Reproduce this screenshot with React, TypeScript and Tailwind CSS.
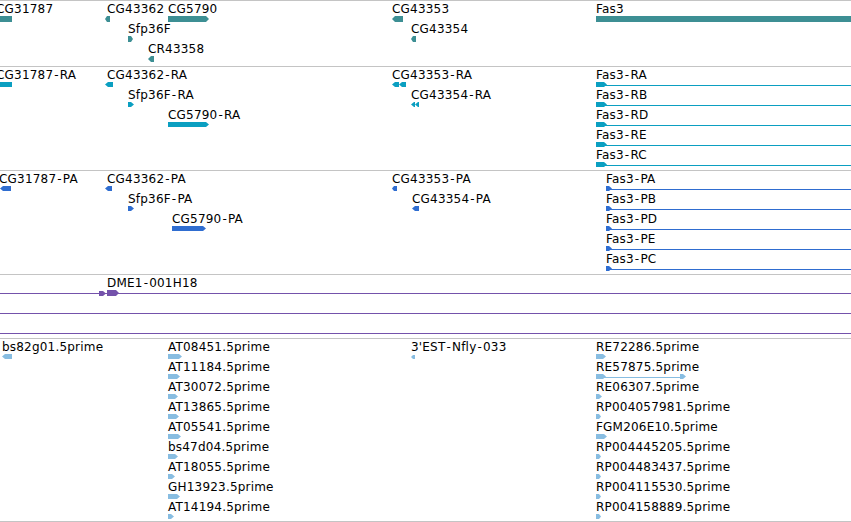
import React from "react";

type Dir = "r" | "l" | "ll" | "bar";
type Feat = {
  label?: string;
  lx?: number;
  row: number;
  g?: { x: number; w: number; dir: Dir; h?: number; top?: number };
  g2?: { x: number; w: number; dir: Dir; h?: number; top?: number };
  line?: { x: number; end?: number };
};

function pts(dir: Dir, w: number, h: number): string[] {
  const t = Math.min(3, Math.max(2, Math.floor(w / 2)));
  if (dir === "bar") return [`0,0 ${w},0 ${w},${h} 0,${h}`];
  if (dir === "r") return [`0,0 ${w - t},0 ${w},${h / 2} ${w - t},${h} 0,${h}`];
  if (dir === "l") return [`${w},0 ${t},0 0,${h / 2} ${t},${h} ${w},${h}`];
  const hw = w / 2;
  return [
    `${hw},0 3,0 0,${h / 2} 3,${h} ${hw},${h}`,
    `${w},0 ${hw + 3},0 ${hw},${h / 2} ${hw + 3},${h} ${w},${h}`,
  ];
}

function Glyph({
  g,
  row,
  color,
  h,
}: {
  g: NonNullable<Feat["g"]>;
  row: number;
  color: string;
  h: number;
}) {
  const hh = g.h ?? h;
  const top = row * 20 + (g.top ?? 15);
  return (
    <svg
      className="absolute"
      style={{ left: g.x, top }}
      width={g.w}
      height={hh}
      viewBox={`0 0 ${g.w} ${hh}`}
    >
      {pts(g.dir, g.w, hh).map((p, i) => (
        <polygon key={i} points={p} fill={color} />
      ))}
    </svg>
  );
}

function Label({ text }: { text: string }) {
  const parts = text.split("-");
  return (
    <>
      {parts.map((p, i) => (
        <React.Fragment key={i}>
          {i > 0 && <span className="mx-px">-</span>}
          {p}
        </React.Fragment>
      ))}
    </>
  );
}

function Track({
  feats,
  color,
  h,
  heightClass,
  bottom,
}: {
  feats: Feat[];
  color: string;
  h: number;
  heightClass: string;
  bottom?: boolean;
}) {
  return (
    <div
      className={`relative w-full overflow-hidden border-t border-[#c4c4c4] ${heightClass} ${
        bottom ? "border-b" : ""
      }`}
    >
      {feats.map((f, i) => (
        <React.Fragment key={i}>
          {f.line && (
            <div
              className="absolute h-px"
              style={{
                left: f.line.x,
                top: f.row * 20 + 18,
                width: f.line.end ? f.line.end - f.line.x : 900,
                backgroundColor: color,
              }}
            />
          )}
          {f.g && <Glyph g={f.g} row={f.row} color={color} h={h} />}
          {f.g2 && <Glyph g={f.g2} row={f.row} color={color} h={h} />}
          {f.label && (
            <div
              className="absolute whitespace-nowrap text-[12px] leading-[14px] tracking-[0.2px] text-black"
              style={{ left: f.lx, top: f.row * 20 + 1 }}
            >
              <Label text={f.label} />
            </div>
          )}
        </React.Fragment>
      ))}
    </div>
  );
}

const gene: Feat[] = [
  { label: "CG31787", lx: -4, row: 0, g: { x: 0, w: 12, dir: "bar" } },
  { label: "CG43362", lx: 107, row: 0, g: { x: 105, w: 5, dir: "l" } },
  { label: "CG5790", lx: 168, row: 0, g: { x: 168, w: 41, dir: "r" } },
  { label: "Sfp36F", lx: 128, row: 1, g: { x: 128, w: 5, dir: "r" } },
  { label: "CR43358", lx: 148, row: 2, g: { x: 148, w: 6, dir: "l" } },
  { label: "CG43353", lx: 392, row: 0, g: { x: 392, w: 11, dir: "l" } },
  { label: "CG43354", lx: 411, row: 1, g: { x: 411, w: 5, dir: "l" } },
  { label: "Fas3", lx: 596, row: 0, g: { x: 596, w: 260, dir: "bar" } },
];

const fas3R = ["Fas3-RA", "Fas3-RB", "Fas3-RD", "Fas3-RE", "Fas3-RC"];
const transcripts: Feat[] = [
  { label: "CG31787-RA", lx: -4, row: 0, g: { x: 0, w: 12, dir: "bar" } },
  { label: "CG43362-RA", lx: 107, row: 0, g: { x: 105, w: 8, dir: "l" } },
  { label: "Sfp36F-RA", lx: 128, row: 1, g: { x: 128, w: 6, dir: "r" } },
  { label: "CG5790-RA", lx: 168, row: 2, g: { x: 168, w: 41, dir: "r" } },
  { label: "CG43353-RA", lx: 392, row: 0, g: { x: 392, w: 14, dir: "ll" } },
  { label: "CG43354-RA", lx: 411, row: 1, g: { x: 411, w: 8, dir: "ll" } },
  ...fas3R.map((l, i) => ({
    label: l,
    lx: 596,
    row: i,
    g: { x: 596, w: 11, dir: "r" as Dir },
    line: { x: 600 },
  })),
];

const fas3P = ["Fas3-PA", "Fas3-PB", "Fas3-PD", "Fas3-PE", "Fas3-PC"];
const proteins: Feat[] = [
  { label: "CG31787-PA", lx: -1, row: 0, g: { x: 0, w: 11, dir: "l" } },
  { label: "CG43362-PA", lx: 107, row: 0, g: { x: 105, w: 7, dir: "l" } },
  { label: "Sfp36F-PA", lx: 128, row: 1, g: { x: 128, w: 6, dir: "r" } },
  { label: "CG5790-PA", lx: 172, row: 2, g: { x: 172, w: 34, dir: "r" } },
  { label: "CG43353-PA", lx: 392, row: 0, g: { x: 392, w: 5, dir: "l" } },
  { label: "CG43354-PA", lx: 412, row: 1, g: { x: 412, w: 7, dir: "l" } },
  ...fas3P.map((l, i) => ({
    label: l,
    lx: 606,
    row: i,
    g: { x: 606, w: 6, dir: "r" as Dir },
    line: { x: 608 },
  })),
];

const dme: Feat[] = [
  {
    label: "DME1-001H18",
    lx: 107,
    row: 0,
    line: { x: 0 },
    g: { x: 99, w: 7, dir: "r", h: 5, top: 16 },
    g2: { x: 107, w: 12, dir: "r", h: 6, top: 15 },
  },
  { row: 1, line: { x: 0 } },
  { row: 2, line: { x: 0 } },
];

const colA = [
  ["AT08451.5prime", 14],
  ["AT11184.5prime", 12],
  ["AT30072.5prime", 10],
  ["AT13865.5prime", 11],
  ["AT05541.5prime", 13],
  ["bs47d04.5prime", 10],
  ["AT18055.5prime", 7],
  ["GH13923.5prime", 12],
  ["AT14194.5prime", 6],
] as const;
const colB = [
  ["RE72286.5prime", 10],
  ["RE57875.5prime", 10],
  ["RE06307.5prime", 6],
  ["RP004057981.5prime", 5],
  ["FGM206E10.5prime", 11],
  ["RP004445205.5prime", 5],
  ["RP004483437.5prime", 5],
  ["RP004115530.5prime", 5],
  ["RP004158889.5prime", 5],
] as const;

const ests: Feat[] = [
  { label: "bs82g01.5prime", lx: 2, row: 0, g: { x: 2, w: 10, dir: "l" } },
  { label: "3'EST-Nfly-033", lx: 411, row: 0, g: { x: 411, w: 4, dir: "l", h: 4, top: 16 } },
  ...colA.map(([l, w], i) => ({
    label: l,
    lx: 168,
    row: i,
    g: { x: 168, w, dir: "r" as Dir },
  })),
  ...colB.map(([l, w], i) => ({
    label: l,
    lx: 596,
    row: i,
    g: { x: 596, w, dir: "r" as Dir },
  })),
  {
    row: 1,
    line: { x: 604, end: 682 },
    g: { x: 680, w: 6, dir: "r", h: 5, top: 15 },
  },
];

export default function App() {
  return (
    <div className="flex h-[522px] w-[851px] flex-col overflow-hidden bg-white font-['DejaVu_Sans',sans-serif]">
      <Track feats={gene} color="#3d8f94" h={6} heightClass="h-[66px]" />
      <Track feats={transcripts} color="#0b9fc1" h={5} heightClass="h-[104px]" />
      <Track feats={proteins} color="#2f6dd0" h={5} heightClass="h-[104px]" />
      <Track feats={dme} color="#7452ab" h={5} heightClass="h-[64px]" />
      <Track feats={ests} color="#88bde1" h={5} heightClass="h-[184px]" bottom />
    </div>
  );
}
